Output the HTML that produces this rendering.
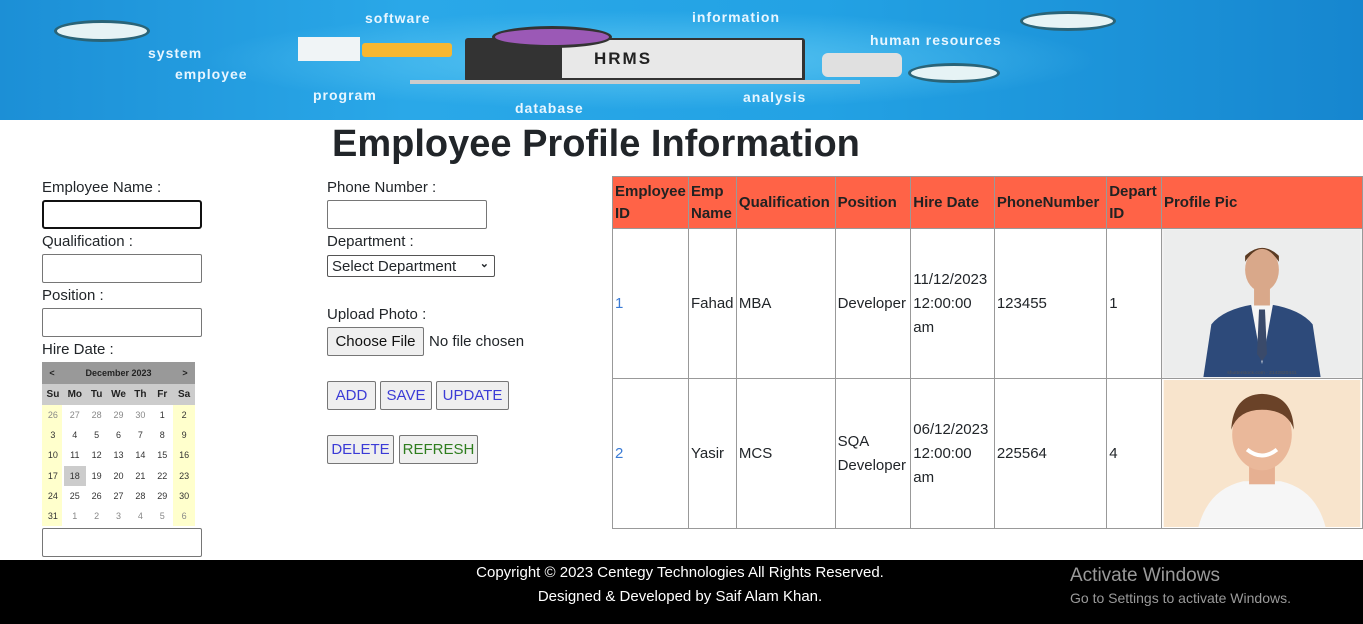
<!DOCTYPE html>
<html><head><meta charset="utf-8"><style>
*{margin:0;padding:0;box-sizing:border-box}
body{width:1363px;height:624px;position:relative;overflow:hidden;background:#fff;font-family:"Liberation Sans",sans-serif;color:#212529}
.a{position:absolute}
.lbl{font-size:15px;color:#212529}
.inp{position:absolute;border:1px solid #767676;border-radius:2px;background:#fff;width:160px;height:29px}
.btn{position:absolute;height:29px;border:1px solid #767676;border-radius:2px;background:#efefef;font-size:15px;color:#3b3bd6;text-align:center;line-height:27px}
.ban{position:absolute;color:#e8f6ff;font-weight:bold;font-size:14px;letter-spacing:1px}
table{border-collapse:collapse;position:absolute;left:612px;top:176px;font-size:15px}
td,th{border:1px solid #999;padding:0 2px;vertical-align:middle;text-align:left}
th{background:#ff6347;font-weight:bold;height:52px;line-height:22px;color:#222}
td{height:150px;line-height:24px}
td svg{display:block}
.cal{position:absolute;left:42px;top:362px;width:153px;font-size:9px;color:#333}
.cal .r{display:flex;height:20.2px;align-items:center}
.cal .r span{flex:1;text-align:center}
</style></head><body>
<div class="a" style="left:0;top:0;width:1363px;height:120px;background:linear-gradient(90deg,#1c8fd6,#2aa8e8 30%,#23a2e4 60%,#1686cf)"></div>
<div class="a" style="left:200px;top:10px;width:900px;height:100px;background:radial-gradient(ellipse,#5cc6f2 0%,rgba(60,180,240,0) 70%)"></div>
<div class="ban" style="left:365px;top:10px">software</div>
<div class="ban" style="left:692px;top:9px">information</div>
<div class="ban" style="left:148px;top:45px">system</div>
<div class="ban" style="left:175px;top:66px">employee</div>
<div class="ban" style="left:870px;top:32px">human resources</div>
<div class="ban" style="left:313px;top:87px">program</div>
<div class="ban" style="left:743px;top:89px">analysis</div>
<div class="ban" style="left:515px;top:100px">database</div>
<div class="a" style="left:54px;top:20px;width:96px;height:22px;border-radius:50%;background:#e6f3f5;border:3px solid #2a6478"></div>
<div class="a" style="left:1020px;top:11px;width:96px;height:20px;border-radius:50%;background:#e6f3f5;border:3px solid #2a6478"></div>
<div class="a" style="left:908px;top:63px;width:92px;height:20px;border-radius:50%;background:#e6f3f5;border:3px solid #2a6478"></div>
<div class="a" style="left:298px;top:37px;width:62px;height:24px;background:#f0f4f6"></div>
<div class="a" style="left:362px;top:43px;width:90px;height:14px;background:#f7b731;border-radius:3px"></div>
<div class="a" style="left:465px;top:38px;width:340px;height:44px;background:#333;border-radius:3px"></div>
<div class="a" style="left:562px;top:40px;width:240px;height:38px;background:#e8e8e8;font-weight:bold;font-size:17px;letter-spacing:2px;line-height:38px;padding-left:32px;color:#222">HRMS</div>
<div class="a" style="left:410px;top:80px;width:450px;height:4px;background:#ccc"></div>
<div class="a" style="left:492px;top:26px;width:120px;height:22px;border-radius:50%;background:#9b59b6;border:3px solid #333"></div>
<div class="a" style="left:822px;top:53px;width:80px;height:24px;background:#e0e0e0;border-radius:6px"></div>

<div class="a" style="left:332px;top:123px;font-size:38px;font-weight:bold;color:#212529;white-space:nowrap">Employee Profile Information</div>

<div class="a lbl" style="left:42px;top:179px">Employee Name :</div>
<div class="inp" style="left:42px;top:200px;border:2px solid #111;border-radius:3px"></div>
<div class="a lbl" style="left:42px;top:233px">Qualification :</div>
<div class="inp" style="left:42px;top:254px"></div>
<div class="a lbl" style="left:42px;top:287px">Position :</div>
<div class="inp" style="left:42px;top:308px"></div>
<div class="a lbl" style="left:42px;top:341px">Hire Date :</div>
<div class="cal">
<div class="r" style="background:#999;height:22px;font-weight:bold;color:#222"><span style="flex:0 0 20px">&lt;</span><span>December 2023</span><span style="flex:0 0 20px">&gt;</span></div>
<div class="r" style="background:#ccc;height:21px;font-weight:bold;font-size:10px;color:#222"><span>Su</span><span>Mo</span><span>Tu</span><span>We</span><span>Th</span><span>Fr</span><span>Sa</span></div>
<div style="background:linear-gradient(90deg,#ffffcc 0,#ffffcc 20px,#fff 20px,#fff 131px,#ffffcc 131px)">
<div class="r"><span style="color:#888">26</span><span style="color:#888">27</span><span style="color:#888">28</span><span style="color:#888">29</span><span style="color:#888">30</span><span>1</span><span>2</span></div>
<div class="r"><span>3</span><span>4</span><span>5</span><span>6</span><span>7</span><span>8</span><span>9</span></div>
<div class="r"><span>10</span><span>11</span><span>12</span><span>13</span><span>14</span><span>15</span><span>16</span></div>
<div class="r"><span>17</span><span style="background:#ccc;line-height:20px">18</span><span>19</span><span>20</span><span>21</span><span>22</span><span>23</span></div>
<div class="r"><span>24</span><span>25</span><span>26</span><span>27</span><span>28</span><span>29</span><span>30</span></div>
<div class="r"><span>31</span><span style="color:#888">1</span><span style="color:#888">2</span><span style="color:#888">3</span><span style="color:#888">4</span><span style="color:#888">5</span><span style="color:#888">6</span></div>
</div></div>
<div class="inp" style="left:42px;top:528px"></div>

<div class="a lbl" style="left:327px;top:179px">Phone Number :</div>
<div class="inp" style="left:327px;top:200px"></div>
<div class="a lbl" style="left:327px;top:233px">Department :</div>
<div class="a" style="left:327px;top:255px;width:168px;height:22px;border:1px solid #555;border-radius:2px;font-size:15px;line-height:22px;padding-left:4px">Select Department<span style="position:absolute;right:5px;top:-3px;font-size:11px;font-weight:bold">&#8964;</span></div>
<div class="a lbl" style="left:327px;top:306px">Upload Photo :</div>
<div class="btn" style="left:327px;top:327px;width:97px;color:#111">Choose File</div>
<div class="a lbl" style="left:429px;top:333px">No file chosen</div>
<div class="btn" style="left:327px;top:381px;width:49px">ADD</div>
<div class="btn" style="left:380px;top:381px;width:52px">SAVE</div>
<div class="btn" style="left:436px;top:381px;width:73px">UPDATE</div>
<div class="btn" style="left:327px;top:435px;width:67px">DELETE</div>
<div class="btn" style="left:399px;top:435px;width:79px;color:#2e7d1e">REFRESH</div>

<table>
<tr><th style="width:76px">Employee<br>ID</th><th style="width:48px">Emp<br>Name</th><th style="width:99px">Qualification</th><th style="width:76px">Position</th><th style="width:84px">Hire Date</th><th style="width:113px">PhoneNumber</th><th style="width:55px">Depart<br>ID</th><th style="width:200px">Profile Pic</th></tr>
<tr><td style="color:#3a7bd5">1</td><td>Fahad</td><td>MBA</td><td>Developer</td><td>11/12/2023<br>12:00:00<br>am</td><td>123455</td><td>1</td><td style="padding:1px;background:#f2f2f2">
<svg width="198" height="147" viewBox="0 0 198 148"><rect width="198" height="148" fill="#eceded"/><path d="M40 148 L48 95 Q60 80 90 75 L108 75 Q138 80 150 95 L158 148Z" fill="#2d4a7a"/><path d="M88 75 L99 135 L110 75Z" fill="#f5f5f5"/><path d="M96 80 L102 80 L104 125 L99 132 L94 125Z" fill="#3a4a6a"/><ellipse cx="99" cy="40" rx="17" ry="22" fill="#d9a88a"/><path d="M82 32 Q99 6 116 32 L116 26 Q99 10 82 26Z" fill="#5a3a22"/><rect x="91" y="58" width="16" height="18" fill="#d9a88a"/><text x="99" y="145" font-size="5" text-anchor="middle" fill="#555">shutterstock.com · 2142820441</text></svg></td></tr>
<tr><td style="color:#3a7bd5">2</td><td>Yasir</td><td>MCS</td><td>SQA<br>Developer</td><td>06/12/2023<br>12:00:00<br>am</td><td>225564</td><td>4</td><td style="padding:1px">
<svg width="198" height="147" viewBox="0 0 198 148"><rect width="198" height="148" fill="#f8e4cc"/><path d="M35 148 Q45 110 80 102 L118 102 Q153 110 163 148Z" fill="#f6f6f6"/><rect x="86" y="80" width="26" height="25" fill="#e6b092"/><ellipse cx="99" cy="55" rx="30" ry="36" fill="#eab89a"/><path d="M68 50 Q70 15 99 14 Q130 15 131 50 Q125 30 99 30 Q75 30 68 50Z" fill="#6a4228"/><path d="M84 70 Q99 82 114 70" stroke="#fff" stroke-width="4" fill="none"/></svg></td></tr>
</table>

<div class="a" style="left:0;top:560px;width:1363px;height:64px;background:#000"></div>
<div class="a" style="left:0;top:561px;width:1360px;text-align:center;color:#fff;font-size:15px;line-height:24px">Copyright © 2023 Centegy Technologies All Rights Reserved.<br>Designed &amp; Developed by Saif Alam Khan.</div>
<div class="a" style="left:1070px;top:565px;color:#9a9a9a;font-size:19px">Activate Windows</div>
<div class="a" style="left:1070px;top:590px;color:#9a9a9a;font-size:14px">Go to Settings to activate Windows.</div>
</body></html>
